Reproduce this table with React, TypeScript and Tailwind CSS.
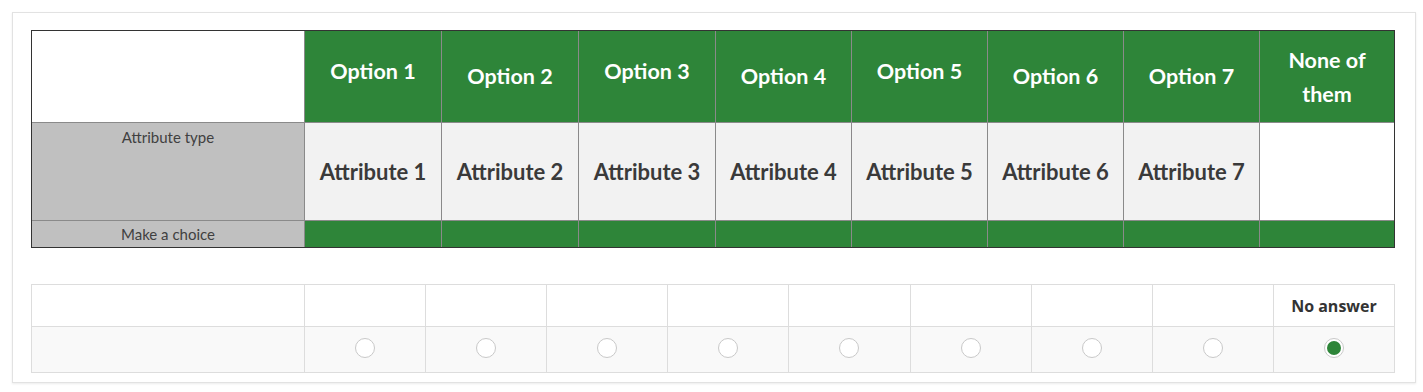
import React from "react"

const options = ["Option 1", "Option 2", "Option 3", "Option 4", "Option 5", "Option 6", "Option 7"]
const attributes = ["Attribute 1", "Attribute 2", "Attribute 3", "Attribute 4", "Attribute 5", "Attribute 6", "Attribute 7"]

function Radio({ checked }: { checked?: boolean }) {
   return (
      <span className="flex h-5 w-5 items-center justify-center rounded-full border border-[#c9c9c9] bg-white">
         {checked && <span className="h-[14px] w-[14px] rounded-full bg-[#2e8539]" />}
      </span>
   )
}

function ChoiceMatrix() {
   return (
      <div className="grid grid-cols-[272px_136px_136px_136px_135px_135px_135px_135px_1fr] grid-rows-[91px_97px_26px] gap-px border border-[#333] bg-[#8a8a8a] font-['Lato',sans-serif]">
         {/* header row */}
         <div className="bg-white" />
         {options.map((o, i) => (
            <div
               key={o}
               className={`flex items-center justify-center bg-[#2e8539] text-[21.5px] font-bold text-white ${i % 2 === 0 && i < 5 ? "pb-[10px]" : ""}`}
            >
               {o}
            </div>
         ))}
         <div className="flex items-center justify-center bg-[#2e8539] text-center text-[21.5px] font-bold leading-[34px] text-white">
            None of
            <br />
            them
         </div>

         {/* attribute row */}
         <div className="bg-[#c0c0c0] pt-[3px] text-center text-[15px] text-[#404040]">Attribute type</div>
         {attributes.map((a) => (
            <div key={a} className="flex items-center justify-center bg-[#f2f2f2] text-[22px] font-bold text-[#3a3a3a]">
               {a}
            </div>
         ))}
         <div className="bg-white" />

         {/* choice row */}
         <div className="flex items-center justify-center bg-[#c0c0c0] text-[15px] text-[#404040]">Make a choice</div>
         {Array.from({ length: 8 }).map((_, i) => (
            <div key={i} className="bg-[#2e8539]" />
         ))}
      </div>
   )
}

function AnswerRow() {
   return (
      <div className="grid grid-cols-[272px_repeat(9,1fr)] grid-rows-[41px_45px] gap-px border border-[#ddd] bg-[#ddd] font-['Open_Sans',sans-serif]">
         {Array.from({ length: 9 }).map((_, i) => (
            <div key={i} className="bg-white" />
         ))}
         <div className="flex items-center justify-center bg-white text-[16px] font-bold text-[#333]">No answer</div>

         <div className="bg-[#f9f9f9]" />
         {Array.from({ length: 9 }).map((_, i) => (
            <div key={i} className="flex items-center justify-center bg-[#f9f9f9] pb-[3px]">
               <Radio checked={i === 8} />
            </div>
         ))}
      </div>
   )
}

export default function App() {
   return (
      <div className="min-h-[392px] bg-white pt-3 pl-3">
         <div className="w-[1404px] border border-[#e2e2e2] bg-white pt-[17px] pr-[20px] pb-[9px] pl-[18px] shadow-[0_1px_2px_rgba(0,0,0,0.08)]">
            <ChoiceMatrix />
            <div className="h-[36px]" />
            <AnswerRow />
         </div>
      </div>
   )
}
